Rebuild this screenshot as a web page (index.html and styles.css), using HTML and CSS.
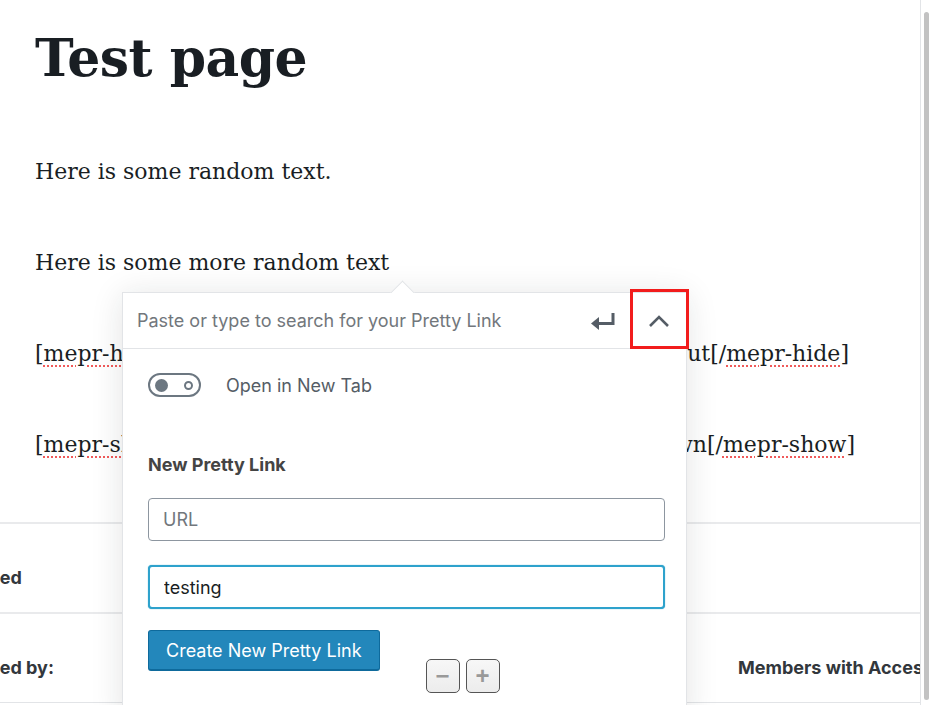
FILE: index.html
```html
<!DOCTYPE html>
<html lang="en">
<head>
  <meta charset="UTF-8">
  <title>Test page</title>
  <link rel="stylesheet" href="styles.css">
</head>
<body>
  <div class="editor">
    <div class="content">
      <h1 class="title">Test page</h1>
      <p>Here is some random text.</p>
      <p>Here is some more random text</p>
      <p class="code-line hide-line">
        <span>[<span class="spell">mepr-hide</span> rules="1"]Hidden</span>
        <span>without[/<span class="spell">mepr-hide</span>]</span>
      </p>
      <p class="code-line show-line">
        <span>[<span class="spell">mepr-show</span> rules="1"]Shown</span>
        <span>shown[/<span class="spell">mepr-show</span>]</span>
      </p>
    </div>

    <div class="meta">
      <div class="meta-row">
        <div class="meta-label">Protected</div>
      </div>
      <div class="meta-row">
        <div class="meta-label">Protected by:</div>
        <div class="meta-value">Members with Access</div>
      </div>
    </div>
  </div>

  <div class="scroll-thumb"></div>

  <!-- link popover -->
  <div class="popover">
    <div class="search-row">
      <input type="text" class="search-input" placeholder="Paste or type to search for your Pretty Link">
      <button class="icon-btn" title="Submit">
        <svg width="26" height="20" viewBox="0 0 26 20"><path d="M23 2v10.5H9" fill="none" stroke="#555d66" stroke-width="3"/><path d="M1 12.5l8-6.5v13z" fill="#555d66"/></svg>
      </button>
      <button class="icon-btn toggle-btn" title="Link settings">
        <svg width="22" height="14" viewBox="0 0 22 14"><path d="M2 12l9-9 9 9" fill="none" stroke="#555d66" stroke-width="2.6"/></svg>
      </button>
    </div>

    <div class="settings">
      <label class="tab-toggle">
        <span class="switch"><span class="knob"></span><span class="dot"></span></span>
        Open in New Tab
      </label>

      <h3 class="section-title">New Pretty Link</h3>
      <input type="text" class="field" placeholder="URL">
      <input type="text" class="field field-focus" value="testing">

      <div class="actions">
        <button class="primary-btn">Create New Pretty Link</button>
        <div class="zoom-btns">
          <button class="zoom-btn">&minus;</button>
          <button class="zoom-btn">+</button>
        </div>
      </div>
    </div>
  </div>

  <div class="highlight"></div>
</body>
</html>
```

FILE: styles.css
```css
body {
  margin: 0;
  background: #fff;
  color: #191e23;
  overflow: hidden;
  height: 705px;
}

.editor {
  width: 920px;
  height: 705px;
  border-right: 1px solid #e2e4e7;
  overflow: hidden;
}

.content { padding: 26px 0 6px 35px; }

.title {
  font-family: "DejaVu Serif", serif;
  font-size: 52px;
  font-weight: bold;
  line-height: 64px;
  margin: 0 0 62px;
  letter-spacing: -0.5px;
}

.content p {
  font-family: "DejaVu Serif", serif;
  font-size: 22px;
  line-height: 40px;
  margin: 0 0 51px;
  white-space: nowrap;
}

.code-line { display: flex; justify-content: space-between; }
.code-line > span:first-child { overflow: hidden; min-width: 0; }
.hide-line { padding-right: 71px; }
.show-line { padding-right: 65px; }

.spell {
  text-decoration: underline dotted #f05a5a;
  text-decoration-thickness: 2px;
  text-underline-offset: 4px;
}

.meta {
  border-bottom: 1px solid #e2e4e7;
  font-family: "Inter", "Liberation Sans", sans-serif;
  font-weight: bold;
  font-size: 18px;
  color: #32373c;
}

.meta-row {
  height: 90px;
  border-top: 2px solid #e9eaec;
  display: flex;
  align-items: center;
  padding-top: 18px;
  box-sizing: border-box;
}

.meta-label {
  margin-left: -64px;
  white-space: nowrap;
}

.meta-value { margin-left: auto; width: 182px; flex: none; white-space: nowrap; }

.scroll-thumb {
  position: absolute;
  top: 12px;
  left: 924px;
  width: 5px;
  height: 688px;
  background: #c2c2c2;
  border-radius: 3px;
}

/* popover */
.popover {
  position: absolute;
  left: 122px;
  top: 292px;
  width: 563px;
  height: 430px;
  background: #fff;
  border: 1px solid #e2e4e7;
  box-shadow: 0 3px 30px rgba(25, 30, 35, 0.12);
  font-family: "Inter", "Liberation Sans", sans-serif;
}

.popover::before {
  content: "";
  position: absolute;
  top: -9px;
  left: 271px;
  width: 16px;
  height: 16px;
  background: #fff;
  border-left: 1px solid #e2e4e7;
  border-top: 1px solid #e2e4e7;
  transform: rotate(45deg);
}

.search-row {
  display: flex;
  align-items: center;
  height: 55px;
  border-bottom: 1px solid #e2e4e7;
  position: relative;
  background: #fff;
}

.search-input {
  flex: 1;
  border: none;
  outline: none;
  font-family: inherit;
  font-size: 18px;
  padding: 0 0 0 14px;
  color: #191e23;
}
.search-input::placeholder { color: #72777c; }

.icon-btn {
  background: none;
  border: none;
  padding: 0;
  width: 40px;
  height: 40px;
  display: flex;
  align-items: center;
  justify-content: center;
}
.toggle-btn { margin: 0 7px 0 16px; }

.settings { padding: 24px 21px 0 25px; }

.tab-toggle {
  display: flex;
  align-items: center;
  gap: 25px;
  font-size: 18px;
  color: #555d66;
}

.switch {
  width: 38px;
  height: 20px;
  border: 2px solid #6c7781;
  border-radius: 13px;
  display: flex;
  align-items: center;
  justify-content: space-between;
  padding: 0 6px 0 5px;
  box-sizing: content-box;
}
.knob {
  width: 13px;
  height: 13px;
  border-radius: 50%;
  background: #6c7781;
}
.dot {
  width: 5px;
  height: 5px;
  border-radius: 50%;
  border: 2px solid #6c7781;
}

.section-title {
  font-size: 18px;
  font-weight: 700;
  color: #444;
  margin: 57px 0 23px;
}

.field {
  display: block;
  width: 100%;
  height: 43px;
  box-sizing: border-box;
  border: 1px solid #8d96a0;
  border-radius: 4px;
  font-family: inherit;
  font-size: 18px;
  padding: 0 14px;
  margin-bottom: 24px;
  color: #191e23;
  outline: none;
}
.field::placeholder { color: #72777c; }
.field-focus {
  height: 44px;
  border: 2px solid #2ea2cc;
  box-shadow: 0 0 1px #2ea2cc;
  margin-bottom: 21px;
}

.actions { display: flex; align-items: flex-start; }

.primary-btn {
  height: 41px;
  padding: 0 17px;
  background: #2387bb;
  border: 1px solid #0e6a9c;
  border-bottom-width: 2px;
  border-radius: 3px;
  color: #fff;
  font-family: inherit;
  font-size: 18px;
}

.zoom-btns { display: flex; gap: 6px; margin: 29px 0 0 46px; }
.zoom-btn {
  width: 34px;
  height: 34px;
  padding: 0;
  border: 1px solid #555;
  border-radius: 5px;
  background: linear-gradient(#f7f7f7, #ececec);
  color: #999;
  font-size: 24px;
  font-weight: bold;
  line-height: 30px;
  font-family: "Liberation Sans", sans-serif;
}

.highlight {
  position: absolute;
  left: 630px;
  top: 289px;
  width: 53px;
  height: 54px;
  border: 3px solid #f21c1c;
}
```
